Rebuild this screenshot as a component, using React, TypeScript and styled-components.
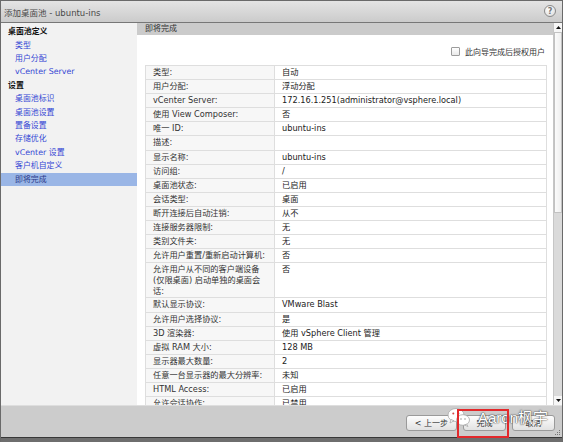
import styled, { createGlobalStyle } from "styled-components"

const GlobalStyle = createGlobalStyle`
    html, body { margin: 0; padding: 0; background: #fff; }
    body { font-family: "DejaVu Sans", "Noto Sans CJK SC", sans-serif; }
`

const Frame = styled.div`
    position: relative;
    width: 563px;
    height: 442px;
    box-sizing: border-box;
    border: 1px solid #6a6a6a;
    border-bottom: none;
    display: flex;
    flex-direction: column;
    overflow: hidden;
    background: #fff;
`
const TitleBar = styled.div`
    flex: none;
    height: 21px;
    display: flex;
    align-items: center;
    justify-content: space-between;
    padding: 0 6px 0 3px;
    background: linear-gradient(#e4e4e4, #cbcbcb);
    border-bottom: 1px solid #777;
    font-size: 8.5px;
    color: #4a4a4a;
`
const HelpIcon = styled.div`
    width: 10px;
    height: 10px;
    border-radius: 50%;
    border: 1px solid #8a8a8a;
    background: radial-gradient(circle at 40% 35%, #ffffff, #d8d8d8);
    display: flex;
    align-items: center;
    justify-content: center;
    font-size: 8px;
    font-weight: bold;
    color: #777;
    margin-top: -1px;
`
const Body = styled.div`
    flex: none;
    height: 382px;
    display: flex;
`
const Sidebar = styled.nav`
    flex: none;
    width: 136px;
    box-sizing: border-box;
    padding-top: 2.3px;
    background: #f2f2f2;
`
const NavItem = styled.div<{ $group?: boolean, $selected?: boolean }>`
    line-height: 13.4px;
    height: 13.4px;
    font-size: 7.9px;
    white-space: nowrap;
    padding-left: ${props => props.$group ? '7px' : '14px'};
    font-weight: ${props => props.$group ? 'bold' : 'normal'};
    color: ${props => props.$group ? '#111' : props.$selected ? '#2b3a8c' : '#3446d4'};
    background: ${props => props.$selected ? '#9ab6e6' : 'transparent'};
`
const Main = styled.div`
    flex: 1;
    min-width: 0;
    display: flex;
    flex-direction: column;
    overflow: hidden;
`
const PageHeader = styled.div`
    flex: none;
    height: 12px;
    line-height: 12px;
    padding-left: 8px;
    background: #cbcbcb;
    font-size: 8px;
    color: #333;
`
const Content = styled.div`
    flex: 1;
    overflow: hidden;
    padding: 11px 6px 0 8px;
`
const OptionRow = styled.label`
    display: flex;
    justify-content: flex-end;
    align-items: center;
    gap: 5px;
    height: 10px;
    margin-bottom: 9px;
    padding-right: 2px;
    font-size: 8px;
    color: #333;
`
const CheckBox = styled.span`
    width: 9px;
    height: 9px;
    box-sizing: border-box;
    border: 1px solid #9c9c9c;
    border-radius: 1px;
    background: linear-gradient(#ffffff, #e9e9e9);
`
const SummaryTable = styled.table`
    width: 100%;
    table-layout: fixed;
    border-collapse: collapse;
    border: 1px solid #cdcdcd;
    font-size: 8.2px;
`
const LabelCell = styled.td<{ $wrap?: boolean }>`
    width: 114px;
    padding: 1px 7px;
    line-height: ${props => props.$wrap ? '10.7px' : '11.1px'};
    border: 1px solid #dedede;
    background: #f7f7f7;
    color: #333;
    vertical-align: top;
    white-space: nowrap;
`
const ValueCell = styled.td`
    padding: 1px 7px;
    line-height: 11.1px;
    border: 1px solid #dedede;
    background: #fff;
    color: #222;
    vertical-align: top;
    white-space: nowrap;
`
const Scrollbar = styled.div`
    flex: none;
    width: 9px;
    box-sizing: border-box;
    display: flex;
    flex-direction: column;
    background: #dadada;
    border-left: 1px solid #c6c6c6;
`
const ScrollArrow = styled.div`
    flex: none;
    height: 9px;
    display: flex;
    align-items: center;
    justify-content: center;
    background: #f6f6f6;
`
const ScrollTrack = styled.div`
    flex: 1;
    display: flex;
    flex-direction: column;
`
const ScrollThumb = styled.div`
    box-sizing: border-box;
    border: 1px solid #c2c2c2;
    background: linear-gradient(to right, #fbfbfb, #efefef);
`
const Footer = styled.div`
    flex: none;
    height: 32px;
    box-sizing: border-box;
    display: flex;
    align-items: center;
    justify-content: flex-end;
    gap: 6px;
    padding: 2px 7px 0 0;
    background: #cccccc;
    border-top: 1px solid #dedede;
`
const Button = styled.button`
    min-width: 43px;
    height: 16px;
    padding: 0 8px;
    font-family: inherit;
    font-size: 8px;
    color: #333;
    border: 1px solid #9a9a9a;
    border-radius: 3px;
    background: linear-gradient(#fdfdfd, #e2e2e2);
`
const BottomEdge = styled.div`
    flex: none;
    height: 5px;
    box-sizing: border-box;
    background: #6e6e6e;
    border-top: 1px solid #383838;
`
const Watermark = styled.div`
    position: absolute;
    left: 446px;
    top: 405px;
    display: flex;
    align-items: center;
    gap: 7px;
    font-family: "Liberation Sans", "Noto Sans CJK SC", sans-serif;
    font-size: 15px;
    color: #fff;
    text-shadow: 0 0 1px #333, 0 0 2px rgba(0, 0, 0, 0.7);
    pointer-events: none;
`
const Highlight = styled.div`
    position: absolute;
    left: 456px;
    top: 408px;
    width: 52px;
    height: 29px;
    box-sizing: border-box;
    border: 2px solid #e3282b;
    pointer-events: none;
`
const Grip = styled.svg`
    position: absolute;
    right: 1px;
    bottom: 6px;
`

const navItems: { text: string, group?: boolean, selected?: boolean }[] = [
    { text: '桌面池定义', group: true },
    { text: '类型' },
    { text: '用户分配' },
    { text: 'vCenter Server' },
    { text: '设置', group: true },
    { text: '桌面池标识' },
    { text: '桌面池设置' },
    { text: '置备设置' },
    { text: '存储优化' },
    { text: 'vCenter 设置' },
    { text: '客户机自定义' },
    { text: '即将完成', selected: true },
]

const rows: [string[], string][] = [
    [['类型:'], '自动'],
    [['用户分配:'], '浮动分配'],
    [['vCenter Server:'], '172.16.1.251(administrator@vsphere.local)'],
    [['使用 View Composer:'], '否'],
    [['唯一 ID:'], 'ubuntu-ins'],
    [['描述:'], ''],
    [['显示名称:'], 'ubuntu-ins'],
    [['访问组:'], '/'],
    [['桌面池状态:'], '已启用'],
    [['会话类型:'], '桌面'],
    [['断开连接后自动注销:'], '从不'],
    [['连接服务器限制:'], '无'],
    [['类别文件夹:'], '无'],
    [['允许用户重置/重新启动计算机:'], '否'],
    [['允许用户从不同的客户端设备', '(仅限桌面) 启动单独的桌面会', '话:'], '否'],
    [['默认显示协议:'], 'VMware Blast'],
    [['允许用户选择协议:'], '是'],
    [['3D 渲染器:'], '使用 vSphere Client 管理'],
    [['虚拟 RAM 大小:'], '128 MB'],
    [['显示器最大数量:'], '2'],
    [['任意一台显示器的最大分辨率:'], '未知'],
    [['HTML Access:'], '已启用'],
    [['允许会话协作:'], '已禁用'],
    [['允许 Flash:'], '否'],
]

const WeChatIcon = () => (
    <svg width="24" height="20" viewBox="0 0 24 20">
        <ellipse cx="9" cy="8" rx="8" ry="6.5" fill="#fff" stroke="#a8a8a8" strokeWidth="0.8" />
        <path d="M4 12.5 L3 16 L7 13.8 Z" fill="#fff" stroke="#a8a8a8" strokeWidth="0.8" />
        <circle cx="6.3" cy="6.5" r="1" fill="#d24a4a" />
        <circle cx="11.5" cy="6.5" r="1" fill="#999" />
        <ellipse cx="16" cy="13" rx="6.5" ry="5.3" fill="#fff" stroke="#a8a8a8" strokeWidth="0.8" />
        <path d="M19.5 17 L21 19.5 L17.5 18 Z" fill="#fff" stroke="#a8a8a8" strokeWidth="0.8" />
        <circle cx="14" cy="12" r="0.8" fill="#999" />
        <circle cx="18" cy="12" r="0.8" fill="#999" />
    </svg>
)

export default function App() {
    return (
        <>
            <GlobalStyle />
            <Frame>
                <TitleBar>
                    <span>添加桌面池 - ubuntu-ins</span>
                    <HelpIcon>?</HelpIcon>
                </TitleBar>
                <Body>
                    <Sidebar>
                        {navItems.map(item =>
                            <NavItem key={item.text} $group={item.group} $selected={item.selected}>{item.text}</NavItem>
                        )}
                    </Sidebar>
                    <Main>
                        <PageHeader>即将完成</PageHeader>
                        <Content>
                            <OptionRow>
                                <CheckBox />
                                <span>此向导完成后授权用户</span>
                            </OptionRow>
                            <SummaryTable>
                                <tbody>
                                    {rows.map(([label, value]) =>
                                        <tr key={label.join('')}>
                                            <LabelCell $wrap={label.length > 1}>
                                                {label.map((line, i) => <div key={i}>{line}</div>)}
                                            </LabelCell>
                                            <ValueCell>{value}</ValueCell>
                                        </tr>
                                    )}
                                </tbody>
                            </SummaryTable>
                        </Content>
                    </Main>
                    <Scrollbar>
                        <ScrollArrow>
                            <svg width="5" height="3" viewBox="0 0 5 3"><path d="M0 3 L2.5 0 L5 3 Z" fill="#111" /></svg>
                        </ScrollArrow>
                        <ScrollTrack>
                            <ScrollThumb style={{ height: 181 }} />
                        </ScrollTrack>
                        <ScrollArrow>
                            <svg width="5" height="3" viewBox="0 0 5 3"><path d="M0 0 L2.5 3 L5 0 Z" fill="#111" /></svg>
                        </ScrollArrow>
                    </Scrollbar>
                </Body>
                <Footer>
                    <Button>&lt; 上一步</Button>
                    <Button>完成</Button>
                    <Button>取消</Button>
                </Footer>
                <BottomEdge />
                <Watermark>
                    <WeChatIcon />
                    <span>Aaron枫宇</span>
                </Watermark>
                <Highlight />
                <Grip width="6" height="6" viewBox="0 0 6 6">
                    <rect x="4" y="0" width="1" height="1" fill="#777" />
                    <rect x="2" y="2" width="1" height="1" fill="#777" />
                    <rect x="4" y="2" width="1" height="1" fill="#777" />
                    <rect x="0" y="4" width="1" height="1" fill="#777" />
                    <rect x="2" y="4" width="1" height="1" fill="#777" />
                    <rect x="4" y="4" width="1" height="1" fill="#777" />
                </Grip>
            </Frame>
        </>
    )
}
